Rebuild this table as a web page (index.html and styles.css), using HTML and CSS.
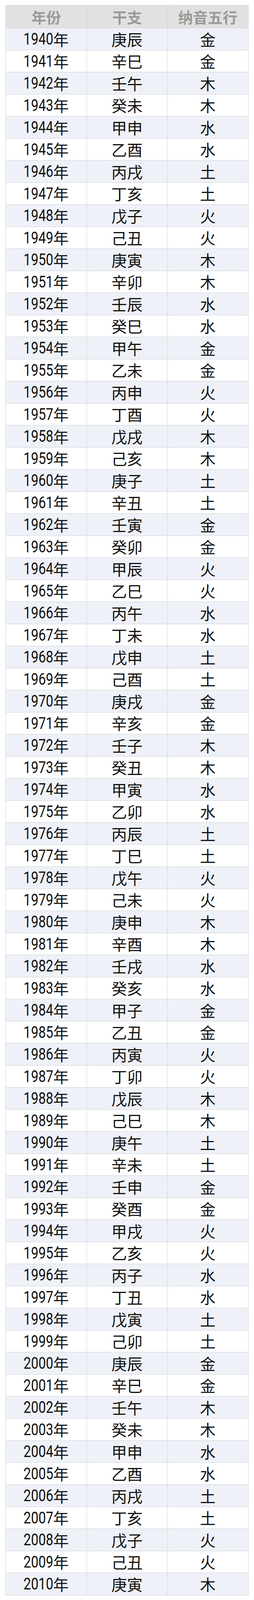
FILE: index.html
```html
<!DOCTYPE html>
<html lang="zh-CN">
<head>
<meta charset="utf-8">
<title>年份 干支 纳音五行</title>
<link rel="stylesheet" href="styles.css">
</head>
<body>
<div class="nayin">
<div class="row head"><div class="cell">年份</div><div class="cell">干支</div><div class="cell">纳音五行</div></div>
<div class="row"><div class="cell"><span class="num">1940</span>年</div><div class="cell">庚辰</div><div class="cell">金</div></div>
<div class="row"><div class="cell"><span class="num">1941</span>年</div><div class="cell">辛巳</div><div class="cell">金</div></div>
<div class="row"><div class="cell"><span class="num">1942</span>年</div><div class="cell">壬午</div><div class="cell">木</div></div>
<div class="row"><div class="cell"><span class="num">1943</span>年</div><div class="cell">癸未</div><div class="cell">木</div></div>
<div class="row"><div class="cell"><span class="num">1944</span>年</div><div class="cell">甲申</div><div class="cell">水</div></div>
<div class="row"><div class="cell"><span class="num">1945</span>年</div><div class="cell">乙酉</div><div class="cell">水</div></div>
<div class="row"><div class="cell"><span class="num">1946</span>年</div><div class="cell">丙戌</div><div class="cell">土</div></div>
<div class="row"><div class="cell"><span class="num">1947</span>年</div><div class="cell">丁亥</div><div class="cell">土</div></div>
<div class="row"><div class="cell"><span class="num">1948</span>年</div><div class="cell">戊子</div><div class="cell">火</div></div>
<div class="row"><div class="cell"><span class="num">1949</span>年</div><div class="cell">己丑</div><div class="cell">火</div></div>
<div class="row"><div class="cell"><span class="num">1950</span>年</div><div class="cell">庚寅</div><div class="cell">木</div></div>
<div class="row"><div class="cell"><span class="num">1951</span>年</div><div class="cell">辛卯</div><div class="cell">木</div></div>
<div class="row"><div class="cell"><span class="num">1952</span>年</div><div class="cell">壬辰</div><div class="cell">水</div></div>
<div class="row"><div class="cell"><span class="num">1953</span>年</div><div class="cell">癸巳</div><div class="cell">水</div></div>
<div class="row"><div class="cell"><span class="num">1954</span>年</div><div class="cell">甲午</div><div class="cell">金</div></div>
<div class="row"><div class="cell"><span class="num">1955</span>年</div><div class="cell">乙未</div><div class="cell">金</div></div>
<div class="row"><div class="cell"><span class="num">1956</span>年</div><div class="cell">丙申</div><div class="cell">火</div></div>
<div class="row"><div class="cell"><span class="num">1957</span>年</div><div class="cell">丁酉</div><div class="cell">火</div></div>
<div class="row"><div class="cell"><span class="num">1958</span>年</div><div class="cell">戊戌</div><div class="cell">木</div></div>
<div class="row"><div class="cell"><span class="num">1959</span>年</div><div class="cell">己亥</div><div class="cell">木</div></div>
<div class="row"><div class="cell"><span class="num">1960</span>年</div><div class="cell">庚子</div><div class="cell">土</div></div>
<div class="row"><div class="cell"><span class="num">1961</span>年</div><div class="cell">辛丑</div><div class="cell">土</div></div>
<div class="row"><div class="cell"><span class="num">1962</span>年</div><div class="cell">壬寅</div><div class="cell">金</div></div>
<div class="row"><div class="cell"><span class="num">1963</span>年</div><div class="cell">癸卯</div><div class="cell">金</div></div>
<div class="row"><div class="cell"><span class="num">1964</span>年</div><div class="cell">甲辰</div><div class="cell">火</div></div>
<div class="row"><div class="cell"><span class="num">1965</span>年</div><div class="cell">乙巳</div><div class="cell">火</div></div>
<div class="row"><div class="cell"><span class="num">1966</span>年</div><div class="cell">丙午</div><div class="cell">水</div></div>
<div class="row"><div class="cell"><span class="num">1967</span>年</div><div class="cell">丁未</div><div class="cell">水</div></div>
<div class="row"><div class="cell"><span class="num">1968</span>年</div><div class="cell">戊申</div><div class="cell">土</div></div>
<div class="row"><div class="cell"><span class="num">1969</span>年</div><div class="cell">己酉</div><div class="cell">土</div></div>
<div class="row"><div class="cell"><span class="num">1970</span>年</div><div class="cell">庚戌</div><div class="cell">金</div></div>
<div class="row"><div class="cell"><span class="num">1971</span>年</div><div class="cell">辛亥</div><div class="cell">金</div></div>
<div class="row"><div class="cell"><span class="num">1972</span>年</div><div class="cell">壬子</div><div class="cell">木</div></div>
<div class="row"><div class="cell"><span class="num">1973</span>年</div><div class="cell">癸丑</div><div class="cell">木</div></div>
<div class="row"><div class="cell"><span class="num">1974</span>年</div><div class="cell">甲寅</div><div class="cell">水</div></div>
<div class="row"><div class="cell"><span class="num">1975</span>年</div><div class="cell">乙卯</div><div class="cell">水</div></div>
<div class="row"><div class="cell"><span class="num">1976</span>年</div><div class="cell">丙辰</div><div class="cell">土</div></div>
<div class="row"><div class="cell"><span class="num">1977</span>年</div><div class="cell">丁巳</div><div class="cell">土</div></div>
<div class="row"><div class="cell"><span class="num">1978</span>年</div><div class="cell">戊午</div><div class="cell">火</div></div>
<div class="row"><div class="cell"><span class="num">1979</span>年</div><div class="cell">己未</div><div class="cell">火</div></div>
<div class="row"><div class="cell"><span class="num">1980</span>年</div><div class="cell">庚申</div><div class="cell">木</div></div>
<div class="row"><div class="cell"><span class="num">1981</span>年</div><div class="cell">辛酉</div><div class="cell">木</div></div>
<div class="row"><div class="cell"><span class="num">1982</span>年</div><div class="cell">壬戌</div><div class="cell">水</div></div>
<div class="row"><div class="cell"><span class="num">1983</span>年</div><div class="cell">癸亥</div><div class="cell">水</div></div>
<div class="row"><div class="cell"><span class="num">1984</span>年</div><div class="cell">甲子</div><div class="cell">金</div></div>
<div class="row"><div class="cell"><span class="num">1985</span>年</div><div class="cell">乙丑</div><div class="cell">金</div></div>
<div class="row"><div class="cell"><span class="num">1986</span>年</div><div class="cell">丙寅</div><div class="cell">火</div></div>
<div class="row"><div class="cell"><span class="num">1987</span>年</div><div class="cell">丁卯</div><div class="cell">火</div></div>
<div class="row"><div class="cell"><span class="num">1988</span>年</div><div class="cell">戊辰</div><div class="cell">木</div></div>
<div class="row"><div class="cell"><span class="num">1989</span>年</div><div class="cell">己巳</div><div class="cell">木</div></div>
<div class="row"><div class="cell"><span class="num">1990</span>年</div><div class="cell">庚午</div><div class="cell">土</div></div>
<div class="row"><div class="cell"><span class="num">1991</span>年</div><div class="cell">辛未</div><div class="cell">土</div></div>
<div class="row"><div class="cell"><span class="num">1992</span>年</div><div class="cell">壬申</div><div class="cell">金</div></div>
<div class="row"><div class="cell"><span class="num">1993</span>年</div><div class="cell">癸酉</div><div class="cell">金</div></div>
<div class="row"><div class="cell"><span class="num">1994</span>年</div><div class="cell">甲戌</div><div class="cell">火</div></div>
<div class="row"><div class="cell"><span class="num">1995</span>年</div><div class="cell">乙亥</div><div class="cell">火</div></div>
<div class="row"><div class="cell"><span class="num">1996</span>年</div><div class="cell">丙子</div><div class="cell">水</div></div>
<div class="row"><div class="cell"><span class="num">1997</span>年</div><div class="cell">丁丑</div><div class="cell">水</div></div>
<div class="row"><div class="cell"><span class="num">1998</span>年</div><div class="cell">戊寅</div><div class="cell">土</div></div>
<div class="row"><div class="cell"><span class="num">1999</span>年</div><div class="cell">己卯</div><div class="cell">土</div></div>
<div class="row"><div class="cell"><span class="num">2000</span>年</div><div class="cell">庚辰</div><div class="cell">金</div></div>
<div class="row"><div class="cell"><span class="num">2001</span>年</div><div class="cell">辛巳</div><div class="cell">金</div></div>
<div class="row"><div class="cell"><span class="num">2002</span>年</div><div class="cell">壬午</div><div class="cell">木</div></div>
<div class="row"><div class="cell"><span class="num">2003</span>年</div><div class="cell">癸未</div><div class="cell">木</div></div>
<div class="row"><div class="cell"><span class="num">2004</span>年</div><div class="cell">甲申</div><div class="cell">水</div></div>
<div class="row"><div class="cell"><span class="num">2005</span>年</div><div class="cell">乙酉</div><div class="cell">水</div></div>
<div class="row"><div class="cell"><span class="num">2006</span>年</div><div class="cell">丙戌</div><div class="cell">土</div></div>
<div class="row"><div class="cell"><span class="num">2007</span>年</div><div class="cell">丁亥</div><div class="cell">土</div></div>
<div class="row"><div class="cell"><span class="num">2008</span>年</div><div class="cell">戊子</div><div class="cell">火</div></div>
<div class="row"><div class="cell"><span class="num">2009</span>年</div><div class="cell">己丑</div><div class="cell">火</div></div>
<div class="row"><div class="cell"><span class="num">2010</span>年</div><div class="cell">庚寅</div><div class="cell">木</div></div>
</div>
</body>
</html>
```

FILE: styles.css
```css
html, body {
  margin: 0;
  padding: 0;
  background: #ffffff;
}

body {
  padding: 13px 14px 0 14px;
  font-family: "Noto Sans CJK SC", "Noto Sans", sans-serif;
  color: #111111;
}

.nayin {
  box-sizing: border-box;
  width: 623px;
  border: 1px solid #cfd2d6;
  display: flex;
  flex-direction: column;
}

.row {
  flex: 0 0 56.5px;
  display: grid;
  grid-template-columns: 207px 206px 208px;
  height: 56.5px;
  box-sizing: border-box;
  border-top: 1px solid #cfd2d6;
  overflow: hidden;
}

.row.head {
  flex-basis: 57px;
  height: 57px;
  border-top: none;
  background: #e1e1e1;
  color: #9a9a9a;
  font-weight: 700;
}

.row:nth-child(even) {
  background: #eef1f7;
}

.row:nth-child(odd):not(.head) {
  background: #ffffff;
}

.cell {
  box-sizing: border-box;
  display: flex;
  align-items: center;
  justify-content: center;
  height: 100%;
  line-height: 1;
  font-size: 40px;
  white-space: nowrap;
  overflow: hidden;
}

.head .cell {
  font-size: 38px;
}

.cell + .cell {
  border-left: 1px solid #cfd2d6;
}

.num {
  display: inline-block;
  font-family: Roboto, "Noto Sans", sans-serif;
  font-size: 43px;
  line-height: 1;
  transform: scaleX(0.79);
  transform-origin: right center;
  margin-left: -21px;
}
```
